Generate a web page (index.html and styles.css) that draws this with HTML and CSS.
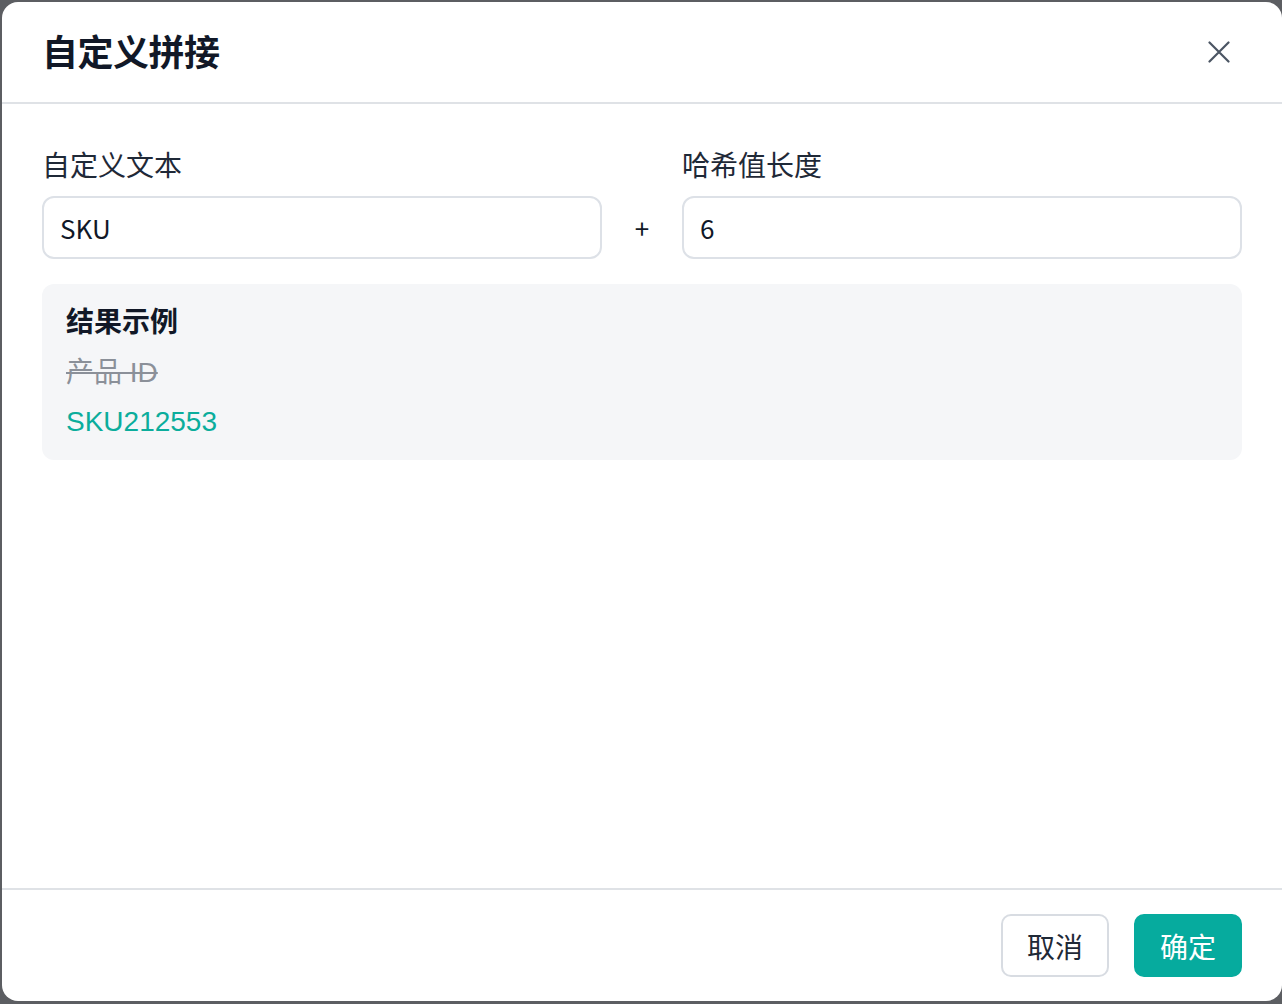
FILE: index.html
```html
<!DOCTYPE html>
<html lang="zh-CN">
<head>
    <meta charset="UTF-8">
    <meta name="viewport" content="width=device-width, initial-scale=1.0">
    <title>自定义拼接</title>
    <link rel="stylesheet" href="styles.css">
</head>
<body>
    <!-- 弹窗 -->
    <div class="modal">
        <div class="modal-header">
            <h2 class="modal-title">自定义拼接</h2>
            <button type="button" class="close-btn" aria-label="关闭">
                <svg width="22" height="22" viewBox="0 0 22 22" fill="none" stroke="#4b5563" stroke-width="2.2" stroke-linecap="round">
                    <path d="M1.5 1.5 L20.5 20.5 M20.5 1.5 L1.5 20.5"/>
                </svg>
            </button>
        </div>
        <div class="modal-body">
            <div class="field-row">
                <div class="field">
                    <label for="customText">自定义文本</label>
                    <input type="text" id="customText" value="SKU">
                </div>
                <div class="plus">+</div>
                <div class="field">
                    <label for="hashLength">哈希值长度</label>
                    <input type="text" id="hashLength" value="6">
                </div>
            </div>
            <!-- 结果示例 -->
            <div class="preview">
                <div class="preview-title">结果示例</div>
                <div class="preview-old">产品 ID</div>
                <div class="preview-new">SKU212553</div>
            </div>
        </div>
        <div class="modal-footer">
            <button type="button" class="btn btn-cancel">取消</button>
            <button type="button" class="btn btn-ok">确定</button>
        </div>
    </div>
</body>
</html>
```

FILE: styles.css
```css
/* 页面与遮罩 */
body {
    margin: 0;
    padding: 2px 0 2px 2px;
    background-color: #5c5e62;
    font-family: "Noto Sans CJK SC", "Noto Sans", sans-serif;
    color: #1f2937;
    height: 1004px;
    box-sizing: border-box;
    overflow: hidden;
}
/* 弹窗 */
.modal {
    background-color: #fff;
    border-radius: 16px;
    width: 1280px;
    height: 999px;
    display: flex;
    flex-direction: column;
    overflow: hidden;
}
.modal-header {
    height: 100px;
    display: flex;
    align-items: center;
    justify-content: space-between;
    padding: 0 52px 0 40px;
    border-bottom: 2px solid #dfe2e6;
    flex-shrink: 0;
}
.modal-title {
    margin: 0 0 4px;
    font-size: 36px;
    font-weight: 700;
    color: #111827;
    letter-spacing: -0.5px;
}
.close-btn {
    border: none;
    background: none;
    padding: 0;
    width: 22px;
    height: 22px;
    cursor: pointer;
    display: flex;
}
.modal-body {
    flex: 1;
    padding: 40px 40px 0;
}
.field-row {
    display: grid;
    grid-template-columns: 1fr 80px 1fr;
    align-items: end;
}
.field label {
    display: block;
    font-size: 28px;
    line-height: 40px;
    margin-bottom: 12px;
    color: #1f2937;
}
.field input {
    display: block;
    width: 100%;
    box-sizing: border-box;
    height: 63px;
    padding: 0 16px;
    font-family: "Noto Sans CJK SC", "Noto Sans", sans-serif;
    font-size: 26px;
    color: #111827;
    border: 2px solid #dde1e7;
    border-radius: 12px;
    outline: none;
}
.plus {
    height: 63px;
    line-height: 63px;
    text-align: center;
    font-size: 26px;
    color: #111827;
}
.preview {
    margin-top: 25px;
    background-color: #f5f6f8;
    border-radius: 12px;
    padding: 16px 24px 18px;
    font-family: "Liberation Sans", "Noto Sans CJK SC", sans-serif;
    font-size: 28px;
    line-height: 40px;
}
.preview-title {
    font-family: "Noto Sans CJK SC", sans-serif;
    font-weight: 700;
    color: #111827;
    margin-bottom: 13px;
}
.preview-old {
    color: #8b9099;
    text-decoration: line-through;
    margin-bottom: 9px;
}
.preview-new {
    color: #0bad9c;
}
/* 底部按钮 */
.modal-footer {
    border-top: 2px solid #dfe2e6;
    display: flex;
    justify-content: flex-end;
    gap: 25px;
    padding: 24px 40px 24px;
    flex-shrink: 0;
}
.btn {
    height: 63px;
    padding: 0 24px;
    font-family: "Noto Sans CJK SC", sans-serif;
    font-size: 28px;
    border-radius: 10px;
    cursor: pointer;
}
.btn-cancel {
    background-color: #fff;
    color: #1f2937;
    border: 2px solid #d8dce2;
}
.btn-ok {
    background-color: #06ab9e;
    color: #fff;
    border: 2px solid #06ab9e;
}
```
